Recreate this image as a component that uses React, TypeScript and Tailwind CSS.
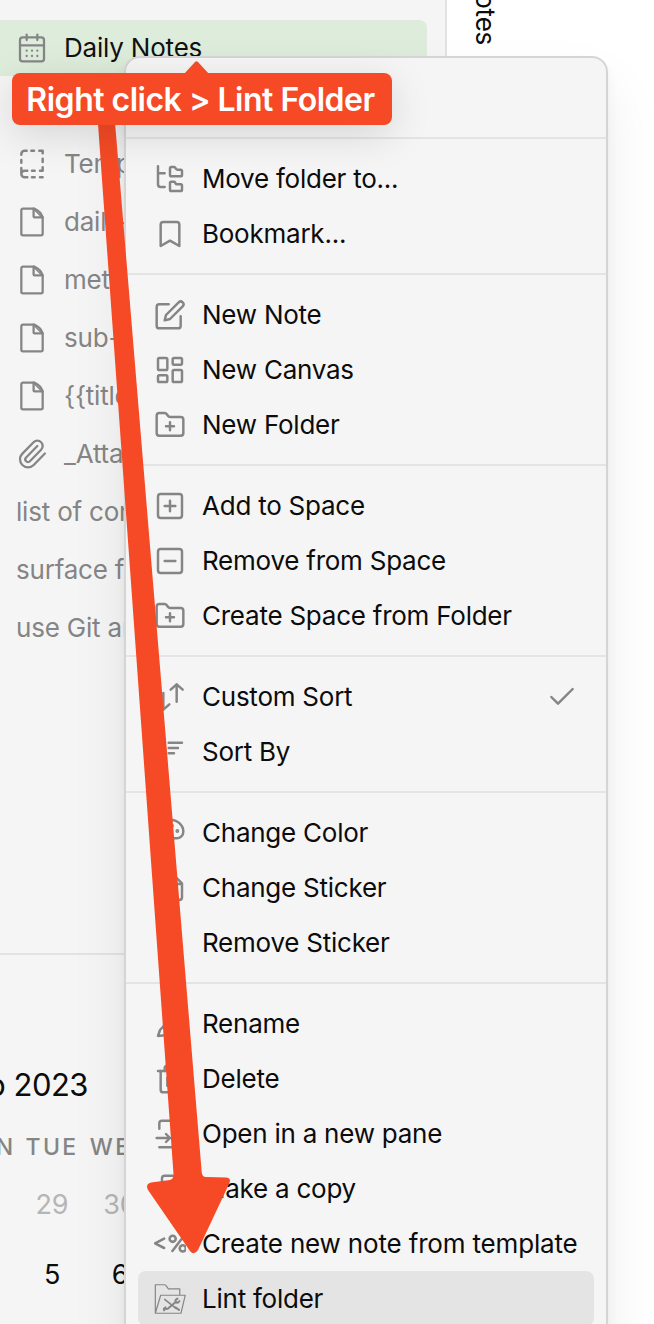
import type { ReactNode } from "react";
import { Bookmark, LayoutDashboard, Paperclip, Palette, Check, CalendarDays, Trash2 } from "lucide-react";

const ICON = "size-8 shrink-0 text-[#858585]";

function Svg({ children, width = 1.85 }: { children: ReactNode; width?: number }) {
  return (
    <svg className={ICON} viewBox="0 0 24 24" fill="none" stroke="currentColor" strokeWidth={width} strokeLinecap="round" strokeLinejoin="round">
      {children}
    </svg>
  );
}

const FileIcon = () => (
  <Svg width={1.7}>
    <path d="M14 2H5.200A1.200 1.200 0 0 0 4 3.200v17.600A1.200 1.200 0 0 0 5.200 22h13.600a1.200 1.200 0 0 0 1.200-1.200V8.500Q18.500 4 14 2Z" />
    <path d="M13.200 2v5.800a.7.700 0 0 0 .7.700H20" />
    <path d="M14 3 19 8" strokeWidth="1" />
  </Svg>
);

const TemplateIcon = () => (
  <Svg>
    <path d="M4 5v-.5A2.500 2.500 0 0 1 6.500 2H8M11.500 2h2M17.500 2H20v2M20 8v2.500M20 14.500V17h-2M20 22h-2M12 22h2M12 17h2M8.500 22H6.500a2.500 2.500 0 0 1 0-5h2M4 19.500V15M4 11V9" />
  </Svg>
);

const FolderTreeIcon = () => (
  <Svg>
    <path d="M13 10h7a1 1 0 0 0 1-1V6a1 1 0 0 0-1-1h-2.500a1 1 0 0 1-.8-.4l-.9-1.200A1 1 0 0 0 15 3h-2a1 1 0 0 0-1 1v5a1 1 0 0 0 1 1Z" />
    <path d="M13 21h7a1 1 0 0 0 1-1v-3a1 1 0 0 0-1-1h-2.880a1 1 0 0 1-.9-.55l-.44-.9a1 1 0 0 0-.9-.55H13a1 1 0 0 0-1 1v5a1 1 0 0 0 1 1Z" />
    <path d="M3 2.500v4.200c0 .6.400 1 1 1h4M3 3v13c0 1.100.900 2 2 2h3" />
  </Svg>
);

const EditIcon = () => (
  <Svg>
    <path d="M11 4H4a2 2 0 0 0-2 2v14a2 2 0 0 0 2 2h14a2 2 0 0 0 2-2v-7" />
    <path d="M18.500 2.500a2.120 2.120 0 0 1 3 3L12 15l-4 1 1-4Z" />
  </Svg>
);

const FolderPlusIcon = () => (
  <Svg>
    <path d="M4 20h16a2 2 0 0 0 2-2V8a2 2 0 0 0-2-2h-7.930a2 2 0 0 1-1.660-.9l-.82-1.200A2 2 0 0 0 7.930 3H4a2 2 0 0 0-2 2v13c0 1.100.900 2 2 2ZM12 10v6M9 13h6" />
  </Svg>
);

const PlusBox = () => (
  <Svg>
    <rect x="3" y="3" width="18" height="18" rx="2" />
    <path d="M12 8v8M8 12h8" />
  </Svg>
);

const MinusBox = () => (
  <Svg>
    <rect x="3" y="3" width="18" height="18" rx="2" />
    <path d="M8 12h8" />
  </Svg>
);

const SortArrows = () => (
  <Svg>
    <path d="M12.500 6.500 17 2.500l4.500 4M17 2.500v13M2.500 17.500l4.500 4 4.500-4M7 21.500V9" />
  </Svg>
);

const SortLines = () => (
  <Svg>
    <path d="M11 5h10M11 9h7M11 13h4M3 17l3 3 3-3M6 18V4" />
  </Svg>
);

const StickerIcon = () => (
  <Svg>
    <path d="M15.500 3H5a2 2 0 0 0-2 2v14c0 1.100.900 2 2 2h14a2 2 0 0 0 2-2V8.500L15.500 3ZM15 3v6h6" />
  </Svg>
);

const PencilIcon = () => (
  <Svg>
    <path d="M17 3a2.850 2.830 0 1 1 4 4L8 20.500 3 21l1.500-4.500Z" />
  </Svg>
);

const OpenPaneIcon = () => (
  <Svg>
    <path d="M4 22h14a2 2 0 0 0 2-2V7.500L14.500 2H6a2 2 0 0 0-2 2v4M2 15h10M9 18l3-3-3-3" />
  </Svg>
);

const CopyIcon = () => (
  <Svg>
    <path d="M15.500 2H8a2 2 0 0 0-2 2v11a2 2 0 0 0 2 2h10a2 2 0 0 0 2-2V6.500L15.500 2Z" />
  </Svg>
);

const TemplaterIcon = () => (
  <Svg width={1.9}>
    <path d="M7.600 8 .800 11.500 7.600 15M22 6.500 13.800 17.200" />
    <circle cx="14" cy="8.100" r="2.300" />
    <circle cx="21.600" cy="15.300" r="2.300" />
  </Svg>
);

const LintIcon = () => (
  <Svg width={0.9}>
    <path d="M1 22.500V1.300H7.500Q8.500 1.300 9 2L10.800 4.400H19.300V9M1 22.700H20.200L23.400 9.200H5Z" />
    <path d="m8 12.300 8.500 6.700" strokeWidth="1.200" />
    <path d="m7.800 19.500 2.500-.2 6.200-5.300M16 18.300l2.800 1.900M16 14.500l.2-1.700 1.400-1.100M16 14.500l1.800.3 1.300-1.200M7.600 20.500l-.2-1.200 1.200-1" strokeWidth="1.500" />
  </Svg>
);

function Item({ icon, children, active, checked }: { icon?: ReactNode; children: ReactNode; active?: boolean; checked?: boolean }) {
  return (
    <div className={`flex h-[55px] shrink-0 items-center rounded-lg pr-4 pl-4 ${active ? "bg-[#e4e4e4]" : ""}`}>
      <div className="mr-4 flex size-8 shrink-0">{icon}</div>
      <span className="grow whitespace-nowrap">{children}</span>
      {checked && <Check className={ICON} strokeWidth={1.85} />}
    </div>
  );
}

const Divider = () => <div className="-mx-3 my-3 h-0.5 shrink-0 bg-[#e4e4e4]" />;

function TreeRow({ icon, children, active }: { icon?: ReactNode; children: ReactNode; active?: boolean }) {
  return (
    <div className={`mb-0.5 flex h-14 w-[427px] shrink-0 items-center gap-4 rounded-r-lg pl-4 ${active ? "bg-[#deecdb] text-[#111]" : "text-[#858585]"}`}>
      {icon}
      <span className="whitespace-nowrap">{children}</span>
    </div>
  );
}

export default function App() {
  return (
    <div className="relative flex h-[1324px] w-[654px] overflow-hidden bg-white font-['Inter',sans-serif] text-[26px] leading-none tracking-[-0.2px] text-[#0c0c0c]">
      <aside className="flex w-[447px] shrink-0 flex-col border-r-2 border-[#e2e2e2] bg-[#f5f5f5] pt-5">
        <div className="flex h-[933px] shrink-0 flex-col">
          <TreeRow active icon={<CalendarDays className={ICON} strokeWidth={1.7} />}>Daily Notes</TreeRow>
          <div className="h-[58px] shrink-0" />
          <TreeRow icon={<TemplateIcon />}>Templates</TreeRow>
          <TreeRow icon={<FileIcon />}>daily-note</TreeRow>
          <TreeRow icon={<FileIcon />}>metadata</TreeRow>
          <TreeRow icon={<FileIcon />}>sub-note</TreeRow>
          <TreeRow icon={<FileIcon />}>{"{{title}}"}</TreeRow>
          <TreeRow icon={<Paperclip className={ICON} strokeWidth={1.7} />}>_Attachments</TreeRow>
          <TreeRow>list of contents</TreeRow>
          <TreeRow>surface form</TreeRow>
          <TreeRow>use Git and</TreeRow>
        </div>
        <div className="flex flex-col border-t-2 border-[#e2e2e2] pt-[111px]">
          <div className="flex h-9 w-[88px] items-center justify-end text-[31px] tracking-[-0.5px] whitespace-nowrap">Sep 2023</div>
          <div className="mt-[31px] -ml-[50px] grid h-7 grid-cols-[68px_68px_68px] items-center text-center text-[23px] font-medium tracking-[2.3px] text-[#858585]">
            <span>MON</span><span>TUE</span><span>WED</span>
          </div>
          <div className="-ml-[50px] grid h-[70px] grid-cols-[68px_68px_68px] items-center pt-4 text-center text-[27px] text-[#b5b5b5]">
            <span>28</span><span>29</span><span>30</span>
          </div>
          <div className="-ml-[50px] grid h-[71px] grid-cols-[68px_68px_68px] items-center pt-4 text-center text-[27px]">
            <span>4</span><span>5</span><span>6</span>
          </div>
        </div>
      </aside>

      <main className="flex h-[45px] grow items-end pl-[25px]">
        <span className="whitespace-nowrap [writing-mode:vertical-rl]">Daily Notes</span>
      </main>

      <div className="absolute top-14 left-[124px] flex h-[1400px] w-[484px] flex-col rounded-2xl border-2 border-[#d5d5d5] bg-[#f5f5f5] p-3 tracking-[-0.24px] shadow-[0_2px_4px_rgba(0,0,0,0.028),0_7px_13px_rgba(0,0,0,0.042),0_30px_60px_rgba(0,0,0,0.07)]">
        <Item><span className="tracking-[-0.38px]">Reveal in Finder</span></Item>
        <Divider />
        <Item icon={<FolderTreeIcon />}>Move folder to...</Item>
        <Item icon={<Bookmark className={ICON} strokeWidth={1.85} />}>Bookmark...</Item>
        <Divider />
        <Item icon={<EditIcon />}>New Note</Item>
        <Item icon={<LayoutDashboard className={ICON} strokeWidth={1.85} />}>New Canvas</Item>
        <Item icon={<FolderPlusIcon />}>New Folder</Item>
        <Divider />
        <Item icon={<PlusBox />}>Add to Space</Item>
        <Item icon={<MinusBox />}>Remove from Space</Item>
        <Item icon={<FolderPlusIcon />}>Create Space from Folder</Item>
        <Divider />
        <Item icon={<SortArrows />} checked>Custom Sort</Item>
        <Item icon={<SortLines />}>Sort By</Item>
        <Divider />
        <Item icon={<Palette className={ICON} strokeWidth={1.85} />}>Change Color</Item>
        <Item icon={<StickerIcon />}>Change Sticker</Item>
        <Item>Remove Sticker</Item>
        <Divider />
        <Item icon={<PencilIcon />}>Rename</Item>
        <Item icon={<Trash2 className={ICON} strokeWidth={1.85} />}>Delete</Item>
        <Item icon={<OpenPaneIcon />}>Open in a new pane</Item>
        <Item icon={<CopyIcon />}>Make a copy</Item>
        <Item icon={<TemplaterIcon />}><span className="tracking-[-0.17px]">Create new note from template</span></Item>
        <Item icon={<LintIcon />} active>Lint folder</Item>
      </div>

      <svg className="absolute top-0 left-0 h-[1324px] w-[654px]" viewBox="0 0 654 1324">
        <path
          d="M97 110 173.500 1174Q174 1179 170 1180L151 1182.500Q145 1184 148 1190L190 1251Q194 1256 198 1250L229 1184Q232 1178 226 1177.500L206 1177Q202 1177 201.700 1172L114 110Z"
          fill="#f54a25"
        />
      </svg>
      <div className="absolute top-[73px] left-3 flex h-[52px] w-[380px] items-center justify-center rounded-lg bg-[#f54a25] pt-0.5 pr-[3px] text-[32px] font-semibold tracking-[-0.5px] whitespace-nowrap text-white shadow-[0_10px_40px_rgba(0,0,0,0.13)]">
        Right click &gt; Lint Folder
      </div>
      <svg className="absolute top-[61px] left-[184px] h-[13px] w-[25px]" viewBox="0 0 25 13">
        <path d="M0 13 11 1Q12.500-.5 14 1L25 13Z" fill="#f54a25" />
      </svg>
    </div>
  );
}
